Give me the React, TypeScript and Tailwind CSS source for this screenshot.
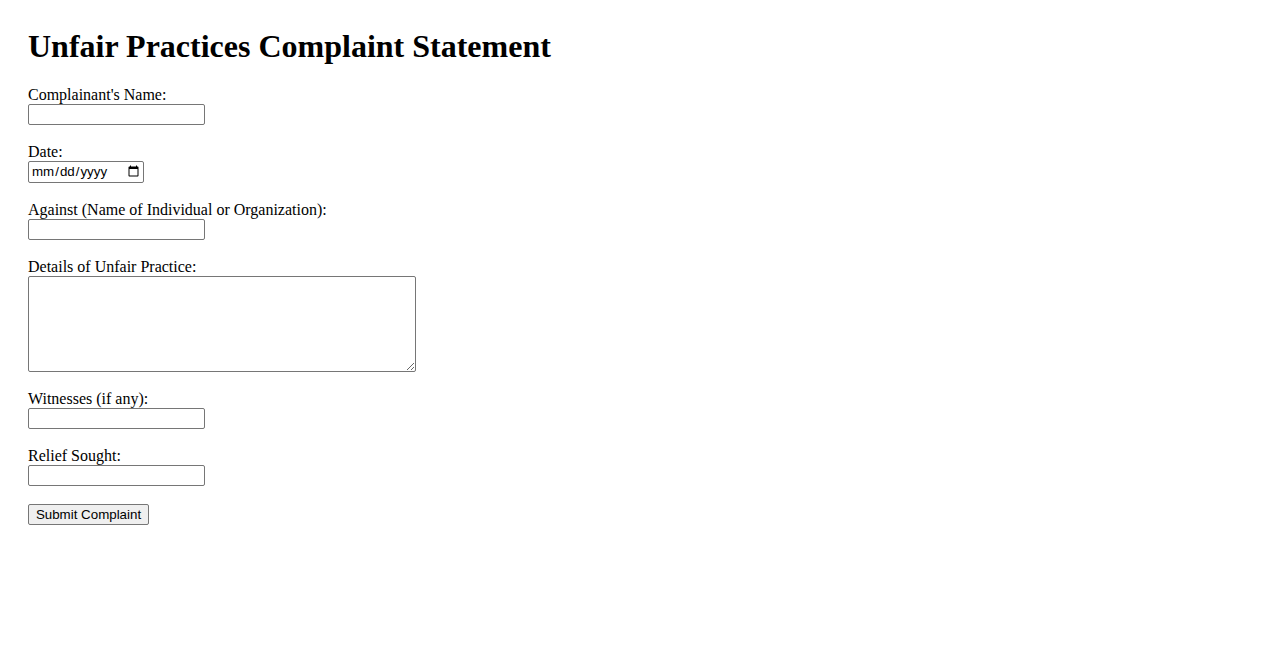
import React from "react";

const inputCls =
  "block w-[177px] h-[21px] border border-[#767676] rounded-[2px] bg-white px-[2px] text-[13.33px] font-['Liberation_Sans',Arial,sans-serif] outline-none";

function Field({ label, children }: { label: string; children: React.ReactNode }) {
  return (
    <div className="mb-[18px]">
      <label className="block leading-[18px] text-[16px]">{label}</label>
      {children}
    </div>
  );
}

export default function App() {
  return (
    <div className="min-h-[650px] bg-white text-black font-['Liberation_Serif','Times_New_Roman',serif] px-[28px] pt-[28px]">
      <h1 className="text-[32px] font-bold leading-[37px] mb-[21px]">Unfair Practices Complaint Statement</h1>
      <form onSubmit={(e) => e.preventDefault()}>
        <Field label="Complainant's Name:">
          <input type="text" className={inputCls} />
        </Field>
        <Field label="Date:">
          <input
            type="date"
            className="block w-[116px] h-[22px] border border-[#767676] rounded-[2px] bg-white pl-[2px] pr-[1px] text-[13.33px] font-['Liberation_Sans',Arial,sans-serif] outline-none"
          />
        </Field>
        <Field label="Against (Name of Individual or Organization):">
          <input type="text" className={inputCls} />
        </Field>
        <Field label="Details of Unfair Practice:">
          <textarea className="block w-[388px] h-[96px] border border-[#767676] rounded-[2px] bg-white p-[2px] text-[13.33px] font-['Liberation_Mono',monospace] outline-none" />
        </Field>
        <Field label="Witnesses (if any):">
          <input type="text" className={inputCls} />
        </Field>
        <Field label="Relief Sought:">
          <input type="text" className={inputCls} />
        </Field>
        <button
          type="submit"
          className="block w-[121px] h-[21px] border border-[#767676] rounded-[2px] bg-[#efefef] text-[13.33px] leading-[15px] font-['Liberation_Sans',Arial,sans-serif] text-black"
        >
          Submit Complaint
        </button>
      </form>
    </div>
  );
}
